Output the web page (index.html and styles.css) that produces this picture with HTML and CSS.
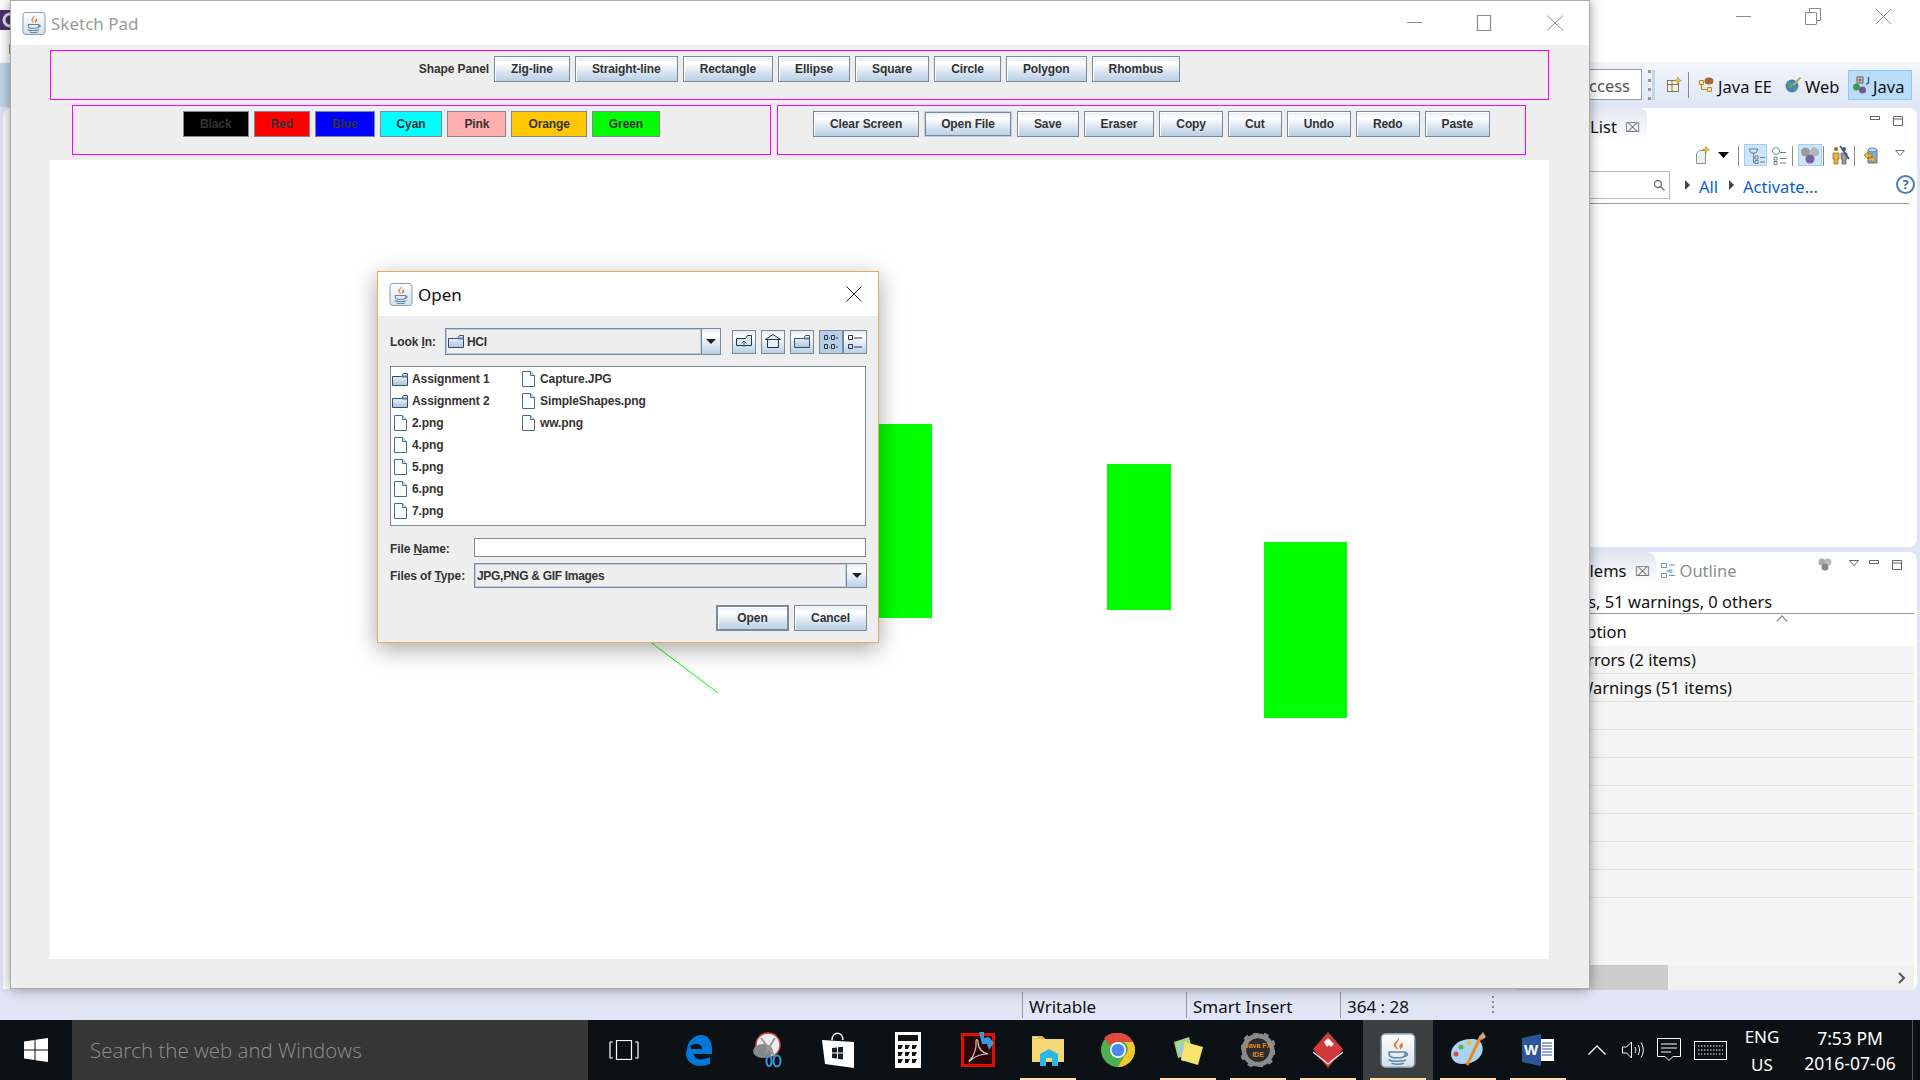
FILE: index.html
```html
<!DOCTYPE html>
<html lang="en">
<head>
    <meta charset="UTF-8">
    <title>Sketch Pad</title>
    <link rel="stylesheet" href="styles.css">
</head>
<body>
    <svg class="defs" width="0" height="0">
        <defs>
            <linearGradient id="tile" x1="0" y1="0" x2="0" y2="1">
                <stop offset="0" stop-color="#ffffff"/>
                <stop offset="1" stop-color="#d5e0ea"/>
            </linearGradient>
            <linearGradient id="folderFill" x1="0" y1="0" x2="0" y2="1">
                <stop offset="0" stop-color="#ffffff"/>
                <stop offset="1" stop-color="#a9c2dc"/>
            </linearGradient>
            <symbol id="java" viewBox="0 0 24 24">
                <rect x="0.5" y="0.5" width="23" height="23" rx="3" fill="url(#tile)" stroke="#7f9ab5"/>
                <path d="M12.5 3c1 2.5-3 4-1.5 6.5.5.8 1 1.300 1 2-1.500-1-3.500-2.500-2.500-4.500.7-1.500 2.500-2 3-4zM15 6.500c-1 1-2.500 1.800-2 3.300.2.600.5 1 .4 1.600 1.500-1 2.800-2.800 1.600-4.900z" fill="#e8782a"/>
                <path d="M6 13h11v1.500c0 1.500-2 2.500-5.500 2.500S6 16 6 14.500z" fill="none" stroke="#5f86a8" stroke-width="1.100"/>
                <path d="M17 13.500c2 0 2 2.500-1 2.500M5.500 18.500c3 1.200 9 1.200 12 0M7.500 20.800c2.500.7 6 .7 8.500 0" fill="none" stroke="#5f86a8" stroke-width="1.100"/>
            </symbol>
            <symbol id="file" viewBox="0 0 13 16">
                <path d="M.5.500h8l4 4v11H.5z" fill="#fff" stroke="#3c6ea3"/>
                <path d="M8.500.500v4h4" fill="#dce7f2" stroke="#3c6ea3"/>
            </symbol>
            <symbol id="folder" viewBox="0 0 16 13">
                <path d="M.5 3.500h9l2-3h4v12H.5z" fill="url(#folderFill)" stroke="#334e6b"/>
                <path d="M10 3.500h5.500" stroke="#4f7cb0" stroke-width="2"/>
            </symbol>
        </defs>
    </svg>

    <!-- eclipse window behind everything -->
    <div class="eclipse">
        <div class="ec-title">
            <div class="ec-title-left">
                <svg width="10" height="20" viewBox="0 0 10 20"><rect width="10" height="20" fill="#4b2f72"/><circle cx="10" cy="10" r="6" fill="none" stroke="#ddd" stroke-width="3"/></svg>
                <span class="ec-menu">File</span>
            </div>
            <div class="win-ctrls">
                <svg width="170" height="20" viewBox="0 0 170 20" fill="none" stroke="#8a8a8a">
                    <path d="M0 10.500h15"/>
                    <path d="M69.500 6.500h11v12h-11zM73.500 6.500v-4h11v12h-4"/>
                    <path d="M140 3l15 15M155 3l-15 15"/>
                </svg>
            </div>
        </div>

        <div class="ec-toolbar">
            <div class="ec-handle-left"></div>
            <div class="quick-access"><span>Quick Access</span></div>
            <div class="grip"></div>
            <svg class="open-persp" width="16" height="16" viewBox="0 0 16 16">
                <rect x="1.500" y="3.500" width="11" height="11" fill="#f4eedb" stroke="#7a7a5a"/>
                <path d="M1.500 7.500h11M6 3.500v11" stroke="#7a7a5a"/>
                <path d="M12 0l1 2.500 2.500 1-2.500 1-1 2.500-1-2.500-2.500-1 2.500-1z" fill="#f2c230" stroke="#a68414" stroke-width=".5"/>
            </svg>
            <div class="tb-sep"></div>
            <div class="persp persp-ee">
                <svg width="16" height="16" viewBox="0 0 16 16">
                    <ellipse cx="11" cy="4" rx="4.500" ry="3.500" fill="#a5672f"/>
                    <path d="M1.500 3.500h4v4h-4zM9.500 10.500h4v4h-4zM3.500 7.500v5h6" fill="#f7e7a6" stroke="#b68a22"/>
                </svg>
                <span>Java EE</span>
            </div>
            <div class="persp persp-web">
                <svg width="16" height="16" viewBox="0 0 16 16">
                    <circle cx="7" cy="9" r="6.500" fill="#3f87b8"/>
                    <path d="M3 6c2-1 3 0 4 2s-2 4-3 2zM9 11c1-1 2-1 3 0l-2 3z" fill="#67a84c"/>
                    <path d="M15.500.500L8 8.500" stroke="#c9a35a" stroke-width="2"/>
                </svg>
                <span>Web</span>
            </div>
            <div class="persp persp-java">
                <svg width="18" height="18" viewBox="0 0 18 18">
                    <rect x="5" y="1" width="6" height="6" fill="none" stroke="#8a5a3c"/>
                    <path d="M8 1v6M5 4h6" stroke="#8a5a3c"/>
                    <path d="M16.500 1v5c0 1.500-1 2-2.500 2" fill="none" stroke="#3a5fb0" stroke-width="1.500"/>
                    <circle cx="4.500" cy="11" r="3.500" fill="#3f9a4a"/>
                    <circle cx="10.500" cy="14" r="3.500" fill="#75559e"/>
                </svg>
                <span>Java</span>
            </div>
        </div>

        <div class="ec-panes">
            <div class="left-stack"></div>
            <div class="right-stack">
                <section class="pane pane-tasks">
                    <div class="pane-tabs">
                        <div class="tab tab-on">Task List <span class="tab-x">&#8999;</span></div>
                        <svg class="pane-ctrls" width="36" height="14" viewBox="0 0 36 14" fill="#fff" stroke="#666">
                            <rect x=".5" y="2.500" width="9" height="3"/>
                            <path d="M23.500 2.500h9v9h-9zM23.500 5h9"/>
                        </svg>
                    </div>
                    <svg class="task-tools" width="225" height="26" viewBox="1690 142 225 26">
                        <path d="M1696.500 153.500l3-3h6v13h-9z" fill="#eef0f4" stroke="#8a8f96"/>
                        <path d="M1706 146l1 2.500 2.500 1-2.500 1-1 2.500-1-2.500-2.500-1 2.500-1z" fill="#f2c230" stroke="#a68414" stroke-width=".5"/>
                        <path d="M1718 152h11l-5.500 6z" fill="#000"/>
                        <path d="M1738.500 146v20M1792.500 146v20M1823.500 146v20M1854.500 146v20" stroke="#888"/>
                        <rect x="1744.500" y="144.500" width="22" height="21" fill="#cde6fb" stroke="#9ed0f6"/>
                        <rect x="1798.500" y="144.500" width="23" height="21" fill="#cde6fb" stroke="#9ed0f6"/>
                        <path d="M1749 149h9l-2 4h-5zM1755 156h3v3h-3zM1755 160.500h3v3h-3zM1753.500 153v9.500h1.500M1760 157.500h5M1760 162h5" fill="none" stroke="#6b7f96"/>
                        <circle cx="1776" cy="151" r="3.500" fill="#fff" stroke="#5f93b8"/>
                        <path d="M1774 157h3v3h-3zM1774 161.500h3v3h-3zM1780 152.500h6M1780 158.500h6M1780 163h6" fill="none" stroke="#6b7f96"/>
                        <circle cx="1805.500" cy="152" r="4.500" fill="#9a9a9a"/>
                        <circle cx="1814.500" cy="152" r="4.500" fill="#b5b5b5"/>
                        <circle cx="1810" cy="159" r="4.500" fill="#7c62a3"/>
                        <circle cx="1836" cy="149" r="2" fill="#a06a1c"/>
                        <path d="M1833 153h6v6h-1v5h-4v-5h-1z" fill="#e4b23c" stroke="#8a6010" stroke-width=".7"/>
                        <circle cx="1844" cy="149" r="2" fill="#555"/>
                        <path d="M1841 153h6v6h-1v5h-4v-5h-1z" fill="#999" stroke="#555" stroke-width=".7"/>
                        <path d="M1840 146l9 13" stroke="#2a4f94" stroke-width="1.500"/>
                        <path d="M1868 150h9v13h-9z" fill="#86aede" stroke="#4e7bb5"/>
                        <ellipse cx="1872.500" cy="150" rx="4.500" ry="2" fill="#c5dcf3" stroke="#4e7bb5"/>
                        <path d="M1864 155l4-3v2h4v3h-4v2zM1876 160l-4 3v-2h-4v-3h4v-2z" fill="#e9b53b" stroke="#9a7110" stroke-width=".7"/>
                        <path d="M1895.500 150.500h9l-4.500 5z" fill="#fff" stroke="#777"/>
                    </svg>
                    <div class="find-row">
                        <div class="find-box">
                            <svg width="12" height="12" viewBox="0 0 12 12" fill="none" stroke="#777" stroke-width="1.400"><circle cx="5" cy="5" r="3.500"/><path d="M7.500 7.500l4 4"/></svg>
                        </div>
                        <span class="tri"></span><a class="link link-all">All</a>
                        <span class="tri"></span><a class="link">Activate...</a>
                        <span class="help">?</span>
                    </div>
                    <div class="find-rule"></div>
                </section>

                <section class="pane pane-problems">
                    <div class="pane-tabs">
                        <div class="tab tab-on tab-prob">Problems <span class="tab-x">&#8999;</span></div>
                        <div class="tab-off">
                            <svg width="14" height="15" viewBox="0 0 14 15" fill="#fff" stroke="#5b9bd5"><path d="M.5.500h5v4h-5zM.5 10.500h5v4h-5zM8 7h3v2H8z"/><path d="M8 2h6M8 12.500h6M5.500 8H8"/></svg>
                            Outline
                        </div>
                        <div class="prob-ctrls">
                            <svg width="90" height="20" viewBox="0 0 90 20" fill="#fff" stroke="#666">
                                <circle cx="7" cy="6" r="3.500" fill="#aaa" stroke="none"/>
                                <circle cx="13" cy="6" r="3.500" fill="#bbb" stroke="none"/>
                                <circle cx="10" cy="11" r="3.500" fill="#888" stroke="none"/>
                                <path d="M34.500 4.500h9l-4.500 5zM54.500 4.500h9v3h-9zM77.500 4.500h9v9h-9zM77.500 7h9"/>
                            </svg>
                        </div>
                    </div>
                    <div class="summary">2 errors, 51 warnings, 0 others</div>
                    <div class="tree-head">Description<span class="sort-up"></span></div>
                    <div class="tree-row">Errors (2 items)</div>
                    <div class="tree-row">Warnings (51 items)</div>
                    <div class="tree-row"></div>
                    <div class="tree-row"></div>
                    <div class="tree-row"></div>
                    <div class="tree-row"></div>
                    <div class="tree-row"></div>
                    <div class="tree-row"></div>
                    <div class="tree-row"></div>
                    <div class="tree-fill"></div>
                    <div class="hscroll">
                        <div class="hthumb"></div>
                        <svg width="12" height="14" viewBox="0 0 12 14" fill="none" stroke="#555" stroke-width="2"><path d="M3 2l5 5-5 5"/></svg>
                    </div>
                </section>
            </div>
        </div>

        <div class="ec-status">
            <div class="st-cell st-write">Writable</div>
            <div class="st-cell st-insert">Smart Insert</div>
            <div class="st-cell st-pos">364 : 28</div>
            <div class="st-dots"></div>
        </div>
    </div>

    <!-- sketch pad window -->
    <div class="sketch">
        <div class="sk-title">
            <svg class="sk-icon" width="24" height="23"><use href="#java"/></svg>
            <span class="sk-name">Sketch Pad</span>
            <svg class="sk-ctrls" width="157" height="16" viewBox="0 0 157 16" fill="none" stroke="#8c8c8c">
                <path d="M0 7.500h15"/>
                <path d="M70.500 .5h13v15h-13z" stroke-width="1.200"/>
                <path d="M140 .5l16 15M156 .5l-16 15"/>
            </svg>
        </div>
        <div class="sk-body">
            <div class="panel panel-shape">
                <span class="panel-label">Shape Panel</span>
                <button class="btn">Zig-line</button>
                <button class="btn">Straight-line</button>
                <button class="btn">Rectangle</button>
                <button class="btn">Ellipse</button>
                <button class="btn">Square</button>
                <button class="btn">Circle</button>
                <button class="btn">Polygon</button>
                <button class="btn">Rhombus</button>
            </div>
            <div class="panel-row">
                <div class="panel panel-color">
                    <button class="btn swatch c-black">Black</button>
                    <button class="btn swatch c-red">Red</button>
                    <button class="btn swatch c-blue">Blue</button>
                    <button class="btn swatch c-cyan">Cyan</button>
                    <button class="btn swatch c-pink">Pink</button>
                    <button class="btn swatch c-orange">Orange</button>
                    <button class="btn swatch c-green">Green</button>
                </div>
                <div class="panel panel-action">
                    <button class="btn">Clear Screen</button>
                    <button class="btn btn-focus">Open File</button>
                    <button class="btn">Save</button>
                    <button class="btn">Eraser</button>
                    <button class="btn">Copy</button>
                    <button class="btn">Cut</button>
                    <button class="btn">Undo</button>
                    <button class="btn">Redo</button>
                    <button class="btn">Paste</button>
                </div>
            </div>
            <div class="canvas">
                <div class="shape shape-a"></div>
                <div class="shape shape-b"></div>
                <div class="shape shape-c"></div>
                <svg class="shape-line" width="700" height="560"><path d="M550 444L668 533" stroke="#00ff00" fill="none"/></svg>
            </div>
        </div>
    </div>

    <!-- file chooser -->
    <div class="dialog">
        <div class="dlg-title">
            <svg width="24" height="23"><use href="#java"/></svg>
            <span class="dlg-name">Open</span>
            <svg class="dlg-close" width="16" height="16" viewBox="0 0 16 16" stroke="#222" fill="none"><path d="M.5.500l15 15M15.500.500l-15 15"/></svg>
        </div>
        <div class="dlg-body">
            <div class="look-row">
                <label class="look-label">Look <u>I</u>n:</label>
                <div class="combo combo-look">
                    <div class="combo-val">
                        <svg width="16" height="13"><use href="#folder"/></svg>
                        <span>HCI</span>
                    </div>
                    <div class="combo-arrow"><i></i></div>
                </div>
                <div class="tool-btns">
                    <button class="tool">
                        <svg width="16" height="14" viewBox="0 0 16 14" fill="none" stroke="#22364d"><path d="M.5 3.500h9l2-3h4v10h-15z" fill="#dfe9f3"/><path d="M8 12V6M5.500 8.500L8 6l2.500 2.500" stroke="#2c5f96"/></svg>
                    </button>
                    <button class="tool">
                        <svg width="16" height="15" viewBox="0 0 16 15" fill="none" stroke="#22364d"><path d="M.5 5.500L8 .5l7.500 5zM2.500 5.500v8h11v-8M2.500 13.500h11" fill="#e8eff6"/></svg>
                    </button>
                    <button class="tool">
                        <svg width="16" height="13"><use href="#folder"/></svg>
                    </button>
                    <div class="tool-pair">
                        <button class="tool tool-on">
                            <svg width="15" height="14" viewBox="0 0 15 14" fill="none" stroke="#22364d"><path d="M.5.500h3v4h-3zM7.500.500h3v4h-3zM.5 9.500h3v4h-3zM7.500 9.500h3v4h-3zM5 3h1M12 3h2M5 12h1M12 12h2"/></svg>
                        </button>
                        <button class="tool">
                            <svg width="15" height="14" viewBox="0 0 15 14" fill="none" stroke="#22364d"><path d="M.5.500h4v4h-4zM.5 9.500h4v4h-4zM6 3h8M6 12h8"/></svg>
                        </button>
                    </div>
                </div>
            </div>
            <div class="file-list">
                <div class="item"><svg width="16" height="13"><use href="#folder"/></svg><span>Assignment 1</span></div>
                <div class="item"><svg width="16" height="13"><use href="#folder"/></svg><span>Assignment 2</span></div>
                <div class="item"><svg class="ic-file" width="13" height="16"><use href="#file"/></svg><span>2.png</span></div>
                <div class="item"><svg class="ic-file" width="13" height="16"><use href="#file"/></svg><span>4.png</span></div>
                <div class="item"><svg class="ic-file" width="13" height="16"><use href="#file"/></svg><span>5.png</span></div>
                <div class="item"><svg class="ic-file" width="13" height="16"><use href="#file"/></svg><span>6.png</span></div>
                <div class="item"><svg class="ic-file" width="13" height="16"><use href="#file"/></svg><span>7.png</span></div>
                <div class="item"><svg class="ic-file" width="13" height="16"><use href="#file"/></svg><span>Capture.JPG</span></div>
                <div class="item"><svg class="ic-file" width="13" height="16"><use href="#file"/></svg><span>SimpleShapes.png</span></div>
                <div class="item"><svg class="ic-file" width="13" height="16"><use href="#file"/></svg><span>ww.png</span></div>
            </div>
            <div class="name-row">
                <label class="form-label">File <u>N</u>ame:</label>
                <div class="name-input"></div>
            </div>
            <div class="type-row">
                <label class="form-label">Files of <u>T</u>ype:</label>
                <div class="combo combo-type">
                    <div class="combo-val"><span>JPG,PNG &amp; GIF Images</span></div>
                    <div class="combo-arrow"><i></i></div>
                </div>
            </div>
            <div class="dlg-actions">
                <button class="btn btn-dlg btn-default">Open</button>
                <button class="btn btn-dlg">Cancel</button>
            </div>
        </div>
    </div>

    <!-- windows taskbar -->
    <div class="taskbar">
        <div class="start">
            <svg width="24" height="24" viewBox="0 0 24 24" fill="#fff"><path d="M0 3.500l10.500-1.500v9.500H0zM11.500 1.800L24 0v11.500H11.500zM0 12.500h10.500V22L0 20.500zM11.500 12.500H24V24l-12.500-1.800z"/></svg>
        </div>
        <div class="search">Search the web and Windows</div>
        <div class="apps">
            <div class="app app-view">
                <svg width="30" height="20" viewBox="0 0 30 20" fill="none" stroke="#fff" stroke-width="1.200"><rect x="7.500" y=".5" width="15" height="19"/><path d="M4 2H1v16h3M26 2h3v16h-3"/></svg>
            </div>
            <div class="app">
                <svg width="30" height="31" viewBox="0 0 30 31"><path d="M4 14C5 5 12 0 18 0c7 0 11 6 11 14v5H11c0 6 8 7 16 3v7c-10 4-23 2-24-10 0-3 1-6 4-8 1 1 1 2 1 3h11c0-6-10-7-15 0z" fill="#0078d7"/></svg>
            </div>
            <div class="app">
                <svg width="34" height="36" viewBox="0 0 34 36">
                    <circle cx="17" cy="13" r="12" fill="#eee" stroke="#c44" stroke-width="1.500"/>
                    <ellipse cx="12" cy="19" rx="10" ry="7" fill="#888"/>
                    <path d="M10 6l14 18M24 6L14 22" stroke="#999" stroke-width="2"/>
                    <ellipse cx="26" cy="29" rx="3.500" ry="5.500" fill="none" stroke="#2f9bd8" stroke-width="2"/>
                    <ellipse cx="18" cy="29" rx="2.500" ry="5" fill="none" stroke="#2f9bd8" stroke-width="2"/>
                </svg>
            </div>
            <div class="app">
                <svg width="32" height="36" viewBox="0 0 32 36">
                    <path d="M10 8c0-9 11-9 11 0" fill="none" stroke="#fff" stroke-width="1.500"/>
                    <path d="M0 8l32 2v26L3 32z" fill="#fff"/>
                    <path d="M10 16l5-.6v5H10zM16 15.300l5-.6v5.700h-5zM10 21.500h5v5l-5-.6zM16 21.500h5v6l-5-.6z" fill="#1a1f24"/>
                </svg>
            </div>
            <div class="app">
                <svg width="26" height="36" viewBox="0 0 26 36">
                    <rect width="26" height="36" fill="#fff"/>
                    <rect x="3" y="3" width="20" height="6" fill="#111"/>
                    <path d="M3 13h5l-2 4H3zM10 13h5l-2 4h-3zM17 13h5l-2 4h-3zM3 20h5l-2 4H3zM10 20h5l-2 4h-3zM17 20h5l-2 4h-3zM3 27h5l-2 4H3zM10 27h5l-2 4h-3zM17 27h5l-2 4h-3z" fill="#111"/>
                </svg>
            </div>
            <div class="app">
                <svg width="34" height="36" viewBox="0 0 34 36">
                    <rect x="1.500" y="2.500" width="31" height="31" fill="#2a0505" stroke="#e00f00" stroke-width="3"/>
                    <path d="M8 29c4-3 8-12 7-20 0-2 2-2 2 1 0 7 5 11 10 12-5 0-12 2-16 5-1 1-3 3-3 2z" fill="none" stroke="#d9c8c8" stroke-width="1.200"/>
                    <path d="M18 0h5v6l5-1 5 6-5 7-2-6h-5z" fill="#3a97dc"/>
                </svg>
            </div>
            <div class="app">
                <svg width="33" height="32" viewBox="0 0 33 32">
                    <path d="M0 2h10l3 3h19v23H0z" fill="#f6d775"/>
                    <path d="M0 2h10l3 3H0z" fill="#e4b84e"/>
                    <path d="M1 3h5v1H1z" fill="#fff"/>
                    <path d="M8 32V20l9-5 9 5v12h-6v-8h-6v8z" fill="#29b7e8"/>
                </svg>
            </div>
            <div class="app">
                <svg width="34" height="34" viewBox="0 0 34 34">
                    <circle cx="17" cy="17" r="17" fill="#4caf50"/>
                    <path d="M17 0a17 17 0 0 1 15 9H17a8 8 0 0 0-8 4L3 5a17 17 0 0 1 14-5z" fill="#de4a3c"/>
                    <path d="M32 9a17 17 0 0 1-15 25l7-12a8 8 0 0 0-1-13z" fill="#f6c42b"/>
                    <circle cx="17" cy="17" r="8" fill="#fff"/>
                    <circle cx="17" cy="17" r="6.300" fill="#4a8af0"/>
                </svg>
            </div>
            <div class="app">
                <svg width="34" height="32" viewBox="0 0 34 32">
                    <path d="M3 8l15-5 4 16-15 5z" fill="#a6d88a"/>
                    <path d="M7 12l12-3 4 15-12 3z" fill="#9dc8ea"/>
                    <path d="M14 8l18 5-5 18-17-5z" fill="#f7e36b"/>
                </svg>
            </div>
            <div class="app">
                <svg width="34" height="34" viewBox="0 0 34 34">
                    <circle cx="17" cy="17" r="14" fill="none" stroke="#8a8a8a" stroke-width="5"/>
                    <circle cx="17" cy="17" r="17" fill="none" stroke="#8a8a8a" stroke-width="3" stroke-dasharray="5 5.700"/>
                    <circle cx="17" cy="17" r="11.500" fill="#2b2b2b"/>
                    <text x="17" y="15" class="fx-text">Java FX</text>
                    <text x="17" y="24" class="fx-text">IDE</text>
                </svg>
            </div>
            <div class="app">
                <svg width="30" height="36" viewBox="0 0 30 36">
                    <path d="M15 0l15 17-15 19L0 17z" fill="#d13a3a"/>
                    <path d="M0 20l15 12 15-12" fill="none" stroke="#fff" stroke-width="1.200"/>
                    <path d="M11 10l4-4 6 6-3 3-2-2-2 2z" fill="#fff"/>
                </svg>
            </div>
            <div class="app app-active">
                <svg width="36" height="35"><use href="#java"/></svg>
            </div>
            <div class="app">
                <svg width="36" height="36" viewBox="0 0 36 36">
                    <path d="M1 22C1 12 12 6 24 7c8 1 10 8 8 14-3 8-12 11-20 11C6 32 1 28 1 22z" fill="#a7d5ef"/>
                    <circle cx="6" cy="22" r="2.500" fill="#d94a4a"/>
                    <circle cx="11" cy="15" r="2.500" fill="#64b04b"/>
                    <circle cx="19" cy="11" r="2.500" fill="#e9c13c"/>
                    <path d="M31 4L17 33" stroke="#ec8a22" stroke-width="3"/>
                    <path d="M29 5l4-5 3 5-4 3z" fill="#c7a77c"/>
                </svg>
            </div>
            <div class="app">
                <svg width="32" height="32" viewBox="0 0 32 32">
                    <path d="M11 5h21v22H11z" fill="#fff"/>
                    <path d="M20 9h10M20 12h10M20 15h10M20 18h10M20 21h10" stroke="#2b579a"/>
                    <path d="M0 4l19-4v32L0 28z" fill="#2b579a"/>
                    <text x="9" y="21" class="word-text">W</text>
                </svg>
            </div>
        </div>
        <div class="tray">
            <div class="tray-slot slot-chev">
                <svg width="18" height="10" viewBox="0 0 18 10" fill="none" stroke="#fff" stroke-width="1.300"><path d="M.5 9.500L9 1l8.500 8.500"/></svg>
            </div>
            <div class="tray-slot slot-vol">
                <svg width="23" height="18" viewBox="0 0 23 18" fill="none" stroke="#fff"><path d="M.5 6h4l5-5v16l-5-5h-4z"/><path d="M13 6c1 2 1 4 0 6M16 4c2 3 2 7 0 10M19 1.500c3 4.500 3 10.500 0 15"/></svg>
            </div>
            <div class="tray-slot slot-msg">
                <svg width="24" height="24" viewBox="0 0 24 24" fill="none" stroke="#fff"><path d="M.5.500h23v18h-7.500l-4 4-4-4H.5z"/><path d="M4 6h16M4 10h16M4 14h10"/></svg>
            </div>
            <div class="tray-slot slot-kbd">
                <svg width="33" height="19" viewBox="0 0 33 19" fill="none" stroke="#fff"><rect x=".5" y=".5" width="32" height="18"/><path d="M4 5h25M4 9h25M4 13h4M10 13h13M25 13h4" stroke-dasharray="1.500 1.500"/></svg>
            </div>
            <div class="tray-slot slot-lang"><span>ENG</span><span class="lang-us">US</span></div>
            <div class="tray-slot slot-clock"><span>7:53 PM</span><span>2016-07-06</span></div>
        </div>
    </div>
</body>
</html>
```

FILE: styles.css
```css
* {
    box-sizing: border-box;
}

html, body {
    margin: 0;
    padding: 0;
}

body {
    position: relative;
    width: 1920px;
    height: 1080px;
    overflow: hidden;
    background: #dfe5f5;
    font-family: "Liberation Sans", Arial, sans-serif;
}

.defs {
    position: absolute;
}

svg {
    display: block;
    flex: none;
}

/* eclipse behind the app */
.eclipse {
    position: absolute;
    left: 0;
    top: 0;
    width: 1920px;
    height: 1020px;
    display: flex;
    flex-direction: column;
    font-family: "Noto Sans", sans-serif;
    font-size: 16.500px;
    color: #111;
}

.ec-title {
    height: 62px;
    background: #fff;
    display: flex;
    justify-content: space-between;
}

.ec-title-left {
    position: relative;
    padding-top: 10px;
}

.ec-menu {
    position: absolute;
    left: 8px;
    top: 38px;
    font-size: 15px;
    color: #333;
}

.win-ctrls {
    padding: 6px 14px 0 0;
}

.ec-toolbar {
    height: 46px;
    display: flex;
    justify-content: flex-end;
    align-items: center;
    padding-right: 8px;
    background: linear-gradient(#f3f5fc, #dfe5f5);
}

.ec-handle-left {
    width: 10px;
    height: 44px;
    background: #c3d7ec;
    margin-right: auto;
}

.quick-access {
    width: 200px;
    height: 31px;
    margin-top: -1px;
    border: 1px solid #9a9a9a;
    background: #fff;
    display: flex;
    align-items: center;
    justify-content: flex-end;
    padding: 2px 11px 0 0;
    font-size: 16.500px;
    color: #555;
}

.grip {
    width: 3px;
    height: 30px;
    margin: 0 15px 0 6px;
    background: repeating-linear-gradient(#9a9a8a 0, #9a9a8a 3px, transparent 3px, transparent 9px);
    box-shadow: 4px 0 0 #c3d7ec;
}

.open-persp {
    margin-right: 6px;
}

.tb-sep {
    width: 1px;
    height: 26px;
    background: #888;
    margin-right: 9px;
}

.persp {
    display: flex;
    align-items: center;
    gap: 4px;
    font-size: 16.500px;
    color: #111;
}

.persp span {
    padding-top: 2px;
}

.persp-ee {
    width: 75px;
    margin-right: 12px;
    white-space: nowrap;
}

.persp-web {
    width: 54px;
    margin-right: 9px;
}

.persp-java {
    width: 64px;
    height: 30px;
    padding-left: 3px;
    gap: 3px;
    background: #b9dcf9;
    border: 1px solid #90c8f6;
}

.ec-panes {
    flex: 1;
    display: flex;
    gap: 5px;
    padding: 0 3px 0 3px;
    min-height: 0;
}

.left-stack {
    flex: 1;
    background: #fff;
    border-radius: 8px 8px 0 0;
}

.right-stack {
    width: 400px;
    display: flex;
    flex-direction: column;
    gap: 5px;
    margin-bottom: -1px;
}

.pane {
    background: #fff;
    border-radius: 8px;
    display: flex;
    flex-direction: column;
}

.pane-tasks {
    height: 439px;
    position: relative;
}

.pane-problems {
    flex: 1;
    min-height: 0;
}

.pane-tabs {
    height: 32px;
    position: relative;
    display: flex;
    align-items: flex-end;
    flex: none;
}

.tab {
    padding: 5px 7px 0 35px;
    height: 32px;
    display: flex;
    align-items: center;
    gap: 8px;
    white-space: nowrap;
    background: linear-gradient(#e4e8f3, #fff);
    border-radius: 0 8px 0 0;
}

.tab-x {
    font-size: 13px;
    color: #777;
}

.pane-ctrls {
    position: absolute;
    right: 11px;
    top: 6px;
}

.task-tools {
    position: absolute;
    left: 173px;
    top: 34px;
}

.find-row {
    margin-top: 31px;
    height: 28px;
    display: flex;
    align-items: center;
    position: relative;
}

.find-box {
    width: 153px;
    height: 28px;
    border: 1px solid #bbb;
    display: flex;
    justify-content: flex-end;
    align-items: center;
    padding-right: 4px;
    margin-right: 15px;
}

.tri {
    width: 0;
    height: 0;
    border-left: 5px solid #444;
    border-top: 5px solid transparent;
    border-bottom: 5px solid transparent;
    margin-right: 9px;
}

.link {
    color: #0a5fd0;
    padding-top: 2px;
}

.link-all {
    margin-right: 11px;
}

.help {
    position: absolute;
    left: 379px;
    top: 4px;
    width: 19px;
    height: 19px;
    border: 2px solid #4a7fb5;
    border-radius: 50%;
    color: #3a6fa5;
    font-size: 13px;
    font-weight: bold;
    line-height: 15px;
    text-align: center;
}

.find-rule {
    height: 1px;
    width: 392px;
    margin-top: 4px;
    background: #9a9a9a;
}

.tab-prob {
    padding-left: 36px;
    padding-right: 6px;
    background: linear-gradient(#e1e5f0, #fff);
    border-radius: 0 10px 0 0;
}

.tab-off {
    display: flex;
    align-items: center;
    gap: 5px;
    height: 32px;
    padding: 5px 0 0 5px;
    color: #8a8f96;
}

.prob-ctrls {
    position: absolute;
    right: 12px;
    top: 4px;
}

.summary {
    height: 29px;
    line-height: 36px;
    padding-left: 18px;
    white-space: nowrap;
}

.tree-head {
    height: 33px;
    border-top: 1px solid #9a9a9a;
    margin-right: 3px;
    padding: 6px 0 0 21px;
    position: relative;
    flex: none;
}

.sort-up {
    position: absolute;
    left: 261px;
    top: 3px;
    width: 8px;
    height: 8px;
    border-left: 1px solid #777;
    border-top: 1px solid #777;
    transform: rotate(45deg);
}

.tree-row {
    height: 28px;
    flex: none;
    margin-right: 3px;
    padding-left: 61px;
    line-height: 28px;
    background: #f5f5f5;
    border-bottom: 1px solid #e2e2e2;
}

.tree-fill {
    flex: 1;
    margin-right: 3px;
    background: #f5f5f5;
}

.hscroll {
    height: 25px;
    flex: none;
    margin-right: 3px;
    background: #f0f0f0;
    display: flex;
    align-items: center;
    justify-content: space-between;
    padding-right: 6px;
}

.hthumb {
    width: 151px;
    height: 100%;
    background: #cdcdcd;
}

.ec-status {
    height: 31px;
    flex: none;
    position: relative;
    display: flex;
    align-items: center;
    padding-left: 1022px;
    font-size: 17px;
}

.st-cell {
    height: 26px;
    line-height: 29px;
    padding-left: 6px;
    border-left: 1px solid #9a9a9a;
    white-space: nowrap;
}

.st-write {
    width: 164px;
}

.st-insert {
    width: 154px;
}

.st-pos {
    width: 152px;
}

.st-dots {
    width: 2px;
    height: 18px;
    margin-left: 0;
    background: repeating-linear-gradient(#888 0, #888 2px, transparent 2px, transparent 5px);
}

/* sketch pad */
.sketch {
    position: absolute;
    left: 10px;
    top: 0;
    width: 1580px;
    height: 989px;
    border: 1px solid #ababab;
    background: #eee;
    box-shadow: 0 0 12px rgba(0, 0, 0, 0.4);
    display: flex;
    flex-direction: column;
}

.sk-title {
    height: 44px;
    flex: none;
    background: #fff;
    display: flex;
    align-items: center;
    padding-left: 11px;
    position: relative;
}

.sk-name {
    margin-left: 5px;
    font-family: "Noto Sans", sans-serif;
    font-size: 17px;
    color: #9a9a9a;
}

.sk-ctrls {
    position: absolute;
    left: 1396px;
    top: 14px;
}

.sk-body {
    flex: 1;
    display: flex;
    flex-direction: column;
    padding: 5px 40px 0 39px;
    min-height: 0;
}

.panel {
    border: 1px solid #ff00ff;
    height: 50px;
    padding-top: 5px;
    display: flex;
    justify-content: center;
    align-items: flex-start;
    gap: 5px;
}

.panel-label {
    font-size: 12px;
    font-weight: bold;
    letter-spacing: -0.1px;
    color: #333;
    line-height: 26px;
}

.panel-row {
    display: flex;
    gap: 6px;
    margin: 5px 23px 0 22px;
}

.panel-color {
    width: 699px;
    flex: none;
}

.panel-action {
    flex: 1;
}

.btn {
    height: 26px;
    padding: 0 16px;
    margin: 0;
    font-family: "Liberation Sans", Arial, sans-serif;
    font-size: 12px;
    font-weight: bold;
    letter-spacing: -0.1px;
    color: #333;
    white-space: nowrap;
    border: 1px solid #7a8a99;
    background: linear-gradient(#e2ebf4 0, #fff 25%, #dce7f2 60%, #b8cfe5 100%);
    box-shadow: inset 1px 1px 0 #fff;
}

.btn-focus {
    border-color: #b8cfe5;
    box-shadow: inset 0 0 0 1px #7a8a99;
}

.swatch {
    box-shadow: none;
}

.c-black { background: #000; }
.c-red { background: #f00; }
.c-blue { background: #00f; }
.c-cyan { background: #0ff; }
.c-pink { background: #ffafaf; }
.c-orange { background: #ffc800; }
.c-green { background: #0f0; }

.canvas {
    flex: 1;
    margin-top: 5px;
    margin-bottom: 29px;
    background: #fff;
    position: relative;
}

.shape {
    position: absolute;
    background: #0f0;
}

.shape-a {
    left: 700px;
    top: 264px;
    width: 182px;
    height: 194px;
}

.shape-b {
    left: 1057px;
    top: 304px;
    width: 64px;
    height: 146px;
}

.shape-c {
    left: 1214px;
    top: 382px;
    width: 83px;
    height: 176px;
}

.shape-line {
    position: absolute;
    left: 0;
    top: 0;
}

/* open dialog */
.dialog {
    position: absolute;
    left: 377px;
    top: 271px;
    width: 502px;
    height: 372px;
    border: 1px solid #e8a95c;
    background: #eee;
    box-shadow: 0 6px 22px rgba(0, 0, 0, 0.35);
    display: flex;
    flex-direction: column;
    font-size: 12px;
    font-weight: bold;
    letter-spacing: -0.1px;
    color: #333;
}

.dlg-title {
    height: 44px;
    flex: none;
    background: #fff;
    display: flex;
    align-items: center;
    padding: 0 16px 0 11px;
}

.dlg-name {
    margin-left: 5px;
    font-family: "Noto Sans", sans-serif;
    font-size: 17px;
    font-weight: normal;
    letter-spacing: 0;
    color: #111;
}

.dlg-close {
    margin-left: auto;
}

.dlg-body {
    flex: 1;
    display: flex;
    flex-direction: column;
    padding: 12px 11px 0 12px;
}

.look-row {
    display: flex;
    align-items: center;
    height: 27px;
}

.look-label {
    width: 55px;
    flex: none;
}

.combo {
    display: flex;
    border: 1px solid #7a8a99;
    background: #eee;
}

.combo-look {
    width: 276px;
    height: 27px;
    margin-right: 11px;
}

.combo-val {
    flex: 1;
    display: flex;
    align-items: center;
    gap: 3px;
    padding-left: 1px;
    letter-spacing: -0.3px;
    border: 1px solid #b8cfe5;
}

.combo-arrow {
    width: 19px;
    flex: none;
    border-left: 1px solid #7a8a99;
    background: linear-gradient(#e2ebf4, #fff 25%, #b8cfe5);
    display: flex;
    align-items: center;
    justify-content: center;
}

.combo-arrow i {
    display: block;
    width: 0;
    height: 0;
    border-left: 5px solid transparent;
    border-right: 5px solid transparent;
    border-top: 5px solid #222;
}

.tool-btns {
    display: flex;
    gap: 5px;
}

.tool-pair {
    display: flex;
}

.tool {
    width: 24px;
    height: 24px;
    padding: 0;
    border: 1px solid #7a8a99;
    background: linear-gradient(#e2ebf4, #fff 25%, #b8cfe5);
    display: flex;
    align-items: center;
    justify-content: center;
}

.tool-on {
    background: #b8cfe5;
}

.file-list {
    height: 160px;
    margin-top: 11px;
    width: 476px;
    border: 1px solid #7a8a99;
    background: #fff;
    padding: 1px 0 0 1px;
    display: grid;
    grid-template-rows: repeat(7, 22px);
    grid-auto-flow: column;
    grid-auto-columns: 128px;
}

.item {
    display: flex;
    align-items: center;
    gap: 4px;
    white-space: nowrap;
}

.ic-file {
    margin: 0 1px 0 2px;
}

.name-row,
.type-row {
    display: flex;
    align-items: center;
}

.name-row {
    margin-top: 12px;
}

.name-row .form-label {
    padding-top: 2px;
}

.type-row {
    margin-top: 6px;
}

.form-label {
    width: 84px;
    flex: none;
}

.name-input {
    width: 392px;
    height: 19px;
    border: 1px solid #7a8a99;
    background: #fff;
}

.combo-type {
    width: 393px;
    height: 25px;
}

.combo-type .combo-arrow {
    width: 20px;
}

.dlg-actions {
    display: flex;
    justify-content: flex-end;
    gap: 5px;
    margin-top: 17px;
}

.btn-dlg {
    width: 73px;
    padding: 0;
}

.btn-default {
    border-width: 2px;
}

/* taskbar */
.taskbar {
    position: absolute;
    left: 0;
    top: 1020px;
    width: 1920px;
    height: 60px;
    background: #0b1115;
    display: flex;
    color: #fff;
    font-family: "Noto Sans", sans-serif;
}

.start {
    width: 72px;
    flex: none;
    display: flex;
    align-items: center;
    padding-left: 24px;
}

.search {
    width: 516px;
    flex: none;
    background: #363636;
    color: #909090;
    font-family: "Open Sans", sans-serif;
    font-weight: 300;
    font-size: 20.500px;
    line-height: 61px;
    padding-left: 18px;
    white-space: nowrap;
}

.apps {
    display: flex;
    margin-left: 5px;
}

.app {
    width: 70px;
    height: 60px;
    display: flex;
    align-items: center;
    justify-content: center;
    position: relative;
}

.app-view {
    padding-right: 8px;
}

.app:nth-child(n+7):not(:nth-child(8))::after {
    content: "";
    position: absolute;
    left: 7px;
    right: 7px;
    bottom: 0;
    height: 2px;
    background: #ffdcb0;
}

.app-active {
    background: #3c3f40;
}

.fx-text {
    font-size: 7px;
    font-weight: bold;
    fill: #e08a2a;
    text-anchor: middle;
    font-family: "Liberation Sans", sans-serif;
}

.word-text {
    font-size: 15px;
    font-weight: bold;
    fill: #fff;
    text-anchor: middle;
    font-family: "Liberation Sans", sans-serif;
}

.tray {
    display: flex;
    margin-left: 6px;
    border-right: 1px solid #555;
    width: 334px;
}

.tray-slot {
    display: flex;
    flex-direction: column;
    align-items: center;
    justify-content: center;
    font-size: 17px;
}

.slot-chev,
.slot-vol,
.slot-msg {
    width: 36px;
}

.slot-kbd {
    width: 46px;
}

.slot-lang {
    width: 58px;
    gap: 4px;
    line-height: 24px;
    padding-top: 1px;
}

.slot-clock {
    width: 118px;
    font-size: 17.500px;
    line-height: 25px;
    padding-top: 1px;
}
```
